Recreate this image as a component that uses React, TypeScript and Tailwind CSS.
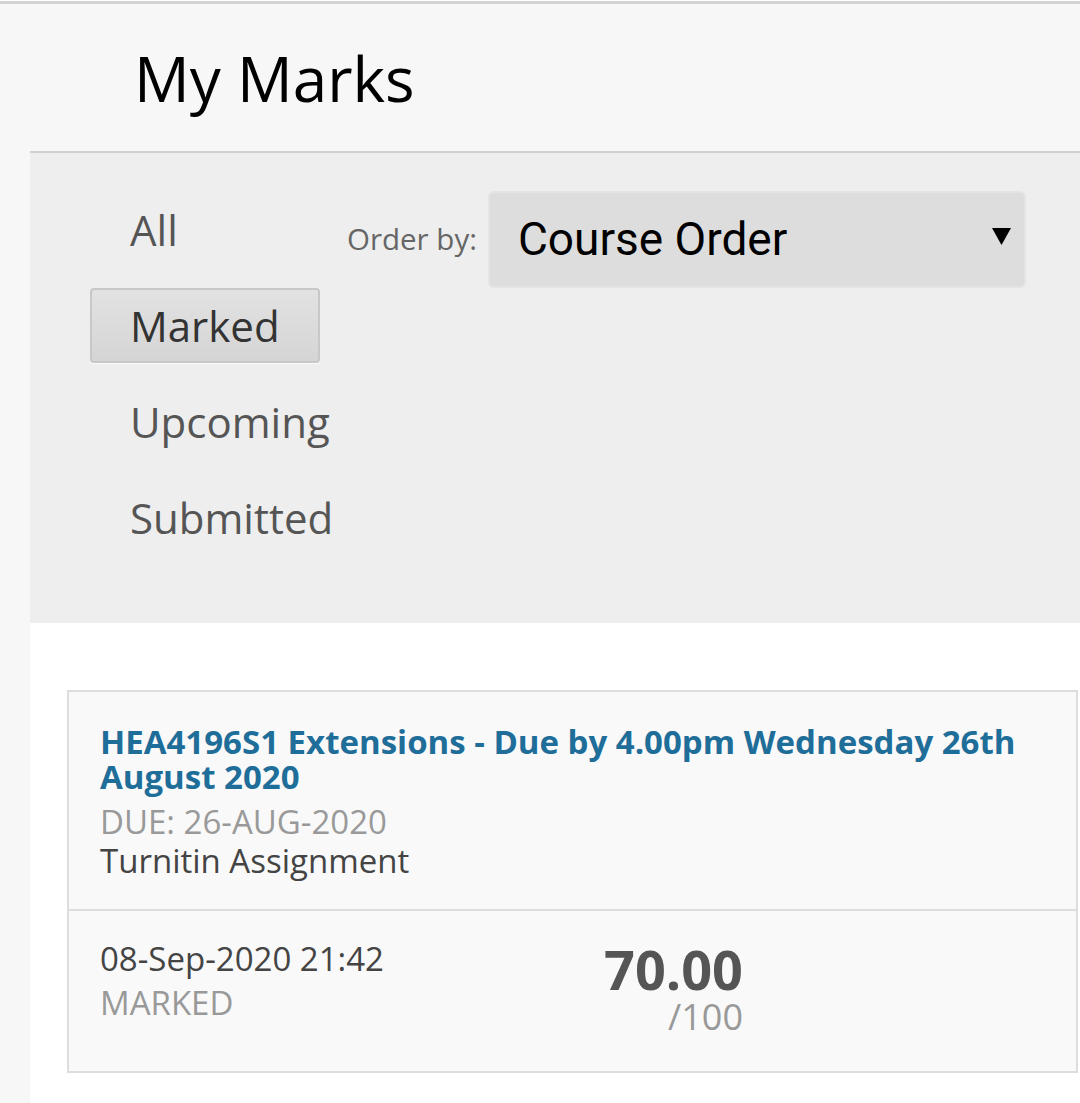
import { useState } from 'react'

const filters = ['All', 'Marked', 'Upcoming', 'Submitted']

export default function App() {
  const [active, setActive] = useState('Marked')

  return (
    <div className="min-h-[1103px] bg-[#f7f7f7] font-['Open_Sans',sans-serif]">
      <div className="mt-px border-t-[3px] border-[#d3d3d3]" />
      <header className="flex h-[147px] items-center pl-[134px]">
        <h1 className="text-[62px] leading-none text-black">My Marks</h1>
      </header>

      <div className="ml-[30px] border-t-2 border-[#d0d0d0] bg-[#eeeeee]">
        <div className="flex pb-[68px] pl-[60px] pt-[39px]">
          <ul className="flex w-[257px] flex-col items-start gap-[21px]">
            {filters.map((f) => (
              <li key={f}>
                <button
                  onClick={() => setActive(f)}
                  className={
                    f === active
                      ? 'flex h-[75px] w-max items-center rounded-[4px] border-2 border-[#c8c8c8] bg-gradient-to-b from-[#e2e2e2] to-[#d5d5d5] px-[38px] text-[42px] text-[#333] shadow-[0_1px_0_#fafafa]'
                      : 'flex h-[75px] w-max items-center border-2 border-transparent px-[38px] text-[42px] text-[#555]'
                  }
                >
                  {f}
                </button>
              </li>
            ))}
          </ul>

          <div className="-mt-px flex h-[97px] items-center self-start">
            <span className="text-[29.5px] text-[#666]">Order by:</span>
            <div className="ml-[11px] flex h-[97px] w-[538px] items-center justify-between rounded-[6px] border-2 border-[#e4e4e4] bg-[#dddddd] pl-[28px] pr-[13px]">
              <span className="font-['Roboto',sans-serif] text-[46px] text-black">Course Order</span>
              <svg width="19" height="17" viewBox="0 0 19 17" className="mb-[6px]">
                <polygon points="0,0 19,0 9.5,17" fill="#000" />
              </svg>
            </div>
          </div>
        </div>
      </div>

      <div className="ml-[30px] h-[480px] bg-white pl-[37px] pr-[2px] pt-[67px]">
        <div className="border-2 border-[#dddddd] bg-[#f9f9f9]">
          <div className="px-[31px] pb-[29px] pt-[32px]">
            <a className="block text-[33px] font-bold leading-[35px] text-[#1f6e99]">
              HEA4196S1 Extensions - Due by 4.00pm Wednesday 26th August 2020
            </a>
            <div className="mt-[8px] text-[33px] leading-[39px] text-[#999]">DUE: 26-AUG-2020</div>
            <div className="text-[33px] leading-[39px] text-[#444]">Turnitin Assignment</div>
          </div>

          <div className="flex items-start border-t-2 border-[#dddddd] px-[31px] pb-[33px] pt-[26px]">
            <div className="w-[400px] pb-[13px]">
              <div className="text-[33px] leading-[44px] text-[#444]">08-Sep-2020 21:42</div>
              <div className="text-[33px] leading-[44px] text-[#999]">MARKED</div>
            </div>
            <div className="mt-[7px] w-[243px] text-right">
              <div className="text-[54px] font-bold leading-[50px] text-[#555]">70.00</div>
              <div className="mt-[3px] text-[36px] leading-[40px] text-[#999]">/100</div>
            </div>
          </div>
        </div>
      </div>
    </div>
  )
}
